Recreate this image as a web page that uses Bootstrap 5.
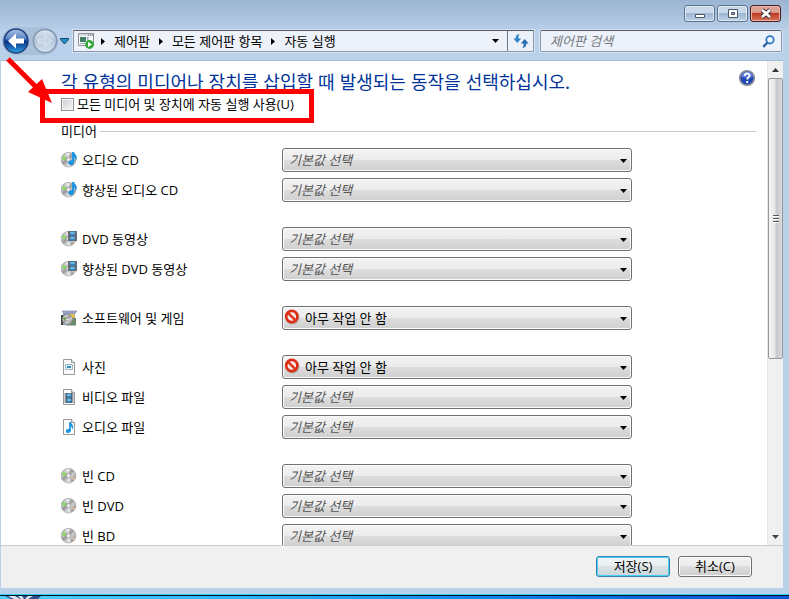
<!DOCTYPE html>
<html lang="ko">
<head>
<meta charset="utf-8">
<meta name="viewport" content="width=device-width, initial-scale=1">
<title>자동 실행</title>
<link href="https://cdn.jsdelivr.net/npm/bootstrap@5.3.0/dist/css/bootstrap.min.css" rel="stylesheet">
<style>
body{font-family:"Open Sans","Noto Sans CJK KR",sans-serif;font-size:13px;line-height:20px;color:#000;background:#b9d1ea}
svg{display:block;flex:none}
.titlebar{height:29px;gap:2px;padding:5px 8px 0;background:linear-gradient(#9bb5d2,#b7cde7)}
.win-btn{width:31px;height:17px;padding:0;border:1px solid #5c738f;border-radius:3px;background:linear-gradient(#c9d9ea 0 45%,#9db6d1 50%,#bcd3ea);box-shadow:inset 0 0 0 1px #dfeaf5}
.win-btn svg{margin:auto}
.win-close{border-color:#4d1a22;background:linear-gradient(#dba193 0 42%,#bc3a24 50%,#d4745a);box-shadow:inset 0 0 0 1px #e7b6a8}
.toolbar{height:31px;gap:4px;padding:1px 7px 8px 2px;background:#b9d1ea}
.back-group{gap:2px}
.orbs{gap:2px;border-radius:14px;background:#a9c0db}
.plain-btn{border:0;padding:0;background:none}
.address,.finder{height:22px;background:#edf2fa;border:1px solid #8a98aa;border-top-color:#555f6c;box-shadow:0 0 0 1px #d4e2f1}
.address a{color:#000;text-decoration:none}
.address .crumb{gap:9px;padding-left:7px}
.refresh{width:26px;height:20px;border-left:1px solid #6d7580}
.finder{width:242px;margin-left:2px;padding:0 6px 0 9px;border-radius:2px}
.finder input{border:0;outline:0;background:none;font-style:italic;padding:0;min-width:0;line-height:18px}
.finder input::placeholder{color:#76797e;opacity:1}
.client{margin:0 6px 0 1px;border-top:1px solid #a9bccf;background:#fff}
.pane{padding:8px 11px 0 60px}
.heading{font-family:"Noto Sans CJK KR",sans-serif;font-size:18px;line-height:24px;color:#039;margin:0;font-weight:400}
.use-all{height:22px;gap:3px}
.use-all input{appearance:none;width:13px;height:13px;border:1px solid #8e8f8f;background:linear-gradient(135deg,#c9cdd3,#f8f8f8);box-shadow:inset 0 0 0 1px #f6f6f6;margin:0}
fieldset{min-width:0}
legend{font-size:13px;line-height:20px;float:none;width:auto;margin:0}
.legend-row{gap:3px;margin:6px 0 7px}
.legend-row span{height:1px;background:#ccc}
.media-groups{gap:25px}
.media-group{gap:6px}
.media-row{height:24px}
.media-row label{width:221px;gap:5px}
.picker{width:350px}
.picker select{appearance:none;width:100%;height:24px;border:1px solid #707070;border-radius:3px;padding:0 24px 0 6px;line-height:22px;color:#555;font-style:italic;background:linear-gradient(#f3f3f3,#ebebeb 50%,#dddddd 51%,#cfcfcf);box-shadow:inset 0 0 0 1px #fbfbfb}
.picker .chosen{font-style:normal;color:#000;padding-left:22px}
.picker .drop{position:absolute;right:5px;top:11px;pointer-events:none}
.picker .ban{position:absolute;left:2px;top:3px;pointer-events:none}
.scroller{width:16px;background:#f0f0f0;border-left:1px solid #e5e5e5}
.scroller button{height:17px}
.thumb{height:281px;border:1px solid #979797;border-radius:2px;background:linear-gradient(90deg,#f5f5f5,#e5e5e7 45%,#c5c7cb 60%,#dcdcde)}
.actions{height:43px;margin:0 6px 0 1px;padding:0 31px 2px 0;gap:8px;background:#f0f0f0;border-top:1px solid #ccc}
.cmd{width:74px;height:21px;padding:0;border:1px solid #707070;border-radius:3px;line-height:19px;background:linear-gradient(#f3f3f3,#ebebeb 49%,#dddddd 50%,#cfcfcf);box-shadow:inset 0 0 0 1px #fbfbfb}
.cmd-main{border-color:#3c7fb1;box-shadow:inset 0 0 0 1px #46d0f2;background:linear-gradient(#f2f5f6,#e8eef0 49%,#dae2e5 50%,#ccd7db)}
.desktop{height:5px;margin-top:6px;padding-top:1px;border-top:1px solid #2fd3ea;background:linear-gradient(#03152e 0 1px,transparent 1px),linear-gradient(90deg,#4fd0f6,#2bb5f7 30%,#0a6fe0 75%,#0654d8)}
.callout{position:absolute;left:0;top:52px;pointer-events:none}
</style>
<script src="https://cdn.jsdelivr.net/npm/bootstrap@5.3.0/dist/js/bootstrap.bundle.min.js"></script>
</head>
<body class="vh-100 d-flex flex-column overflow-hidden position-relative">
<svg width="0" height="0" class="position-absolute" aria-hidden="true">
<defs>
<linearGradient id="silver" x1="0" y1="0" x2="1" y2="1"><stop offset="0" stop-color="#8f8f8f"/><stop offset=".25" stop-color="#d2d2d2"/><stop offset=".45" stop-color="#989898"/><stop offset=".6" stop-color="#cfcfcf"/><stop offset="1" stop-color="#757575"/></linearGradient>
<linearGradient id="orb" x1="0" y1="0" x2="0" y2="1"><stop offset="0" stop-color="#8fb2df"/><stop offset=".45" stop-color="#2b5db0"/><stop offset=".52" stop-color="#0b2f86"/><stop offset="1" stop-color="#2fa5e6"/></linearGradient>
<linearGradient id="orbOff" x1="0" y1="0" x2="0" y2="1"><stop offset="0" stop-color="#dce6f0"/><stop offset=".5" stop-color="#b4c6d9"/><stop offset="1" stop-color="#d5e2ef"/></linearGradient>
<symbol id="disc" viewBox="0 0 16 16"><circle cx="7.500" cy="7.700" r="7.300" fill="url(#silver)" stroke="#8d8d8d" stroke-width=".6"/><path d="M7.500 8 5 1.200 9 .9Z M7.500 8 10 14.600 6 14.800Z" fill="#fff" opacity=".6"/><path d="M.8 6 3 4l2.500 2.500L3 8Z" fill="#7fe04c"/><path d="m10 9 4.200 1.500-1 1.800Z" fill="#e8c3a0"/><circle cx="7.500" cy="7.700" r="2.300" fill="#ddd" stroke="#999" stroke-width=".6"/><circle cx="7.500" cy="7.700" r=".8" fill="#fff"/></symbol>
<symbol id="note" viewBox="0 0 8 12"><path d="M3.600 0h1.900c.2 2 2.600 2.600 2.500 5.300-.1 1.400-.6 2.400-1.500 3.200.5-2 .1-3.300-1-3.900v5C5.500 11 4 12 2.400 12 1 12 0 11.200 0 10c0-1.300 1.300-2.300 2.600-2.300.4 0 .7 0 1 .2Z" fill="#1a94e2"/></symbol>
<symbol id="film" viewBox="0 0 9 10"><path d="M0 0h9v10H0Z" fill="#38424f"/><path d="M2.200.5h4.600v4H2.200Zm0 5h4.600v4H2.200Z" fill="#69b7e4"/><path d="M2.200 3h4.600v1.500H2.200Zm0 5h4.600v1.500H2.200Z" fill="#3a7db5"/><path d="M1 .5v9M8 .5v9" stroke="#e8eef4" stroke-width="1" stroke-dasharray="1 1"/></symbol>
<symbol id="sheet" viewBox="0 0 16 16"><path d="M2.500.5h8l3 3v12h-11Z" fill="#fbfbfb" stroke="#999"/><path d="M10.500.5v3h3" fill="#eee" stroke="#999"/></symbol>
<symbol id="audio-disc" viewBox="0 0 16 16"><use href="#disc" width="16" height="16"/><use href="#note" x="7" y="0" width="9" height="13"/></symbol>
<symbol id="video-disc" viewBox="0 0 16 16"><use href="#disc" width="16" height="16"/><use href="#film" x="7" y="0" width="9" height="10"/></symbol>
<symbol id="software" viewBox="0 0 16 16"><path d="M1 1h15l-1.500 2H2.500Z" fill="#a9afd0" stroke="#7b82a8" stroke-width=".7"/><path d="M2 3h12v12H2Z" fill="#8e9abf"/><path d="M8 4h5.500v8H8Z" fill="#f0c640"/><path d="M0 5h2v10H0Z" fill="#444"/><path d="M7 8h8v7.500H5Z" fill="#6c8b6c"/><circle cx="6.500" cy="9.500" r="5.200" fill="url(#silver)" stroke="#777" stroke-width=".6"/><circle cx="6.500" cy="9.500" r="1.300" fill="#fff" stroke="#888" stroke-width=".5"/><path d="m2 8 2-1 1 2-2 1Z" fill="#62a344"/></symbol>
<symbol id="photo" viewBox="0 0 16 16"><use href="#sheet" width="16" height="16"/><path d="M4.500 5.500h7v5h-7Z" fill="#e9f2f7" stroke="#9ab4c4"/><path d="M6 7h4v2H6Z" fill="#328fbe"/></symbol>
<symbol id="video-file" viewBox="0 0 16 16"><use href="#sheet" width="16" height="16"/><use href="#film" x="3.500" y="4" width="9" height="10"/></symbol>
<symbol id="audio-file" viewBox="0 0 16 16"><use href="#sheet" width="16" height="16"/><use href="#note" x="4.500" y="3" width="8" height="11"/></symbol>
<symbol id="caret" viewBox="0 0 7 4"><path d="M0 0h7L3.500 4Z"/></symbol>
<symbol id="crumb-arrow" viewBox="0 0 4 7"><path d="M0 0v7l4-3.500Z"/></symbol>
<symbol id="no-entry" viewBox="0 0 16 16"><circle cx="8.500" cy="8.600" r="7" fill="#777" opacity=".45"/><circle cx="7.800" cy="7.500" r="5.600" fill="#f1eeee" stroke="#df2c14" stroke-width="2.600"/><path d="m4 3.800 7.600 7.600" stroke="#e3341b" stroke-width="2.600"/></symbol>
</defs>
</svg>

<header>
<div class="titlebar d-flex justify-content-end">
<button class="win-btn" aria-label="최소화"><svg width="12" height="11"><path d="M1.500 6.500h9v3h-9Z" fill="#fff" stroke="#4b5665"/></svg></button>
<button class="win-btn" aria-label="최대화"><svg width="12" height="11"><path d="M1.500 1.500h9v8h-9Z" fill="#fff" stroke="#4b5665"/><path d="M4.500 4.500h3v2h-3Z" fill="#8ba8c6" stroke="#4b5665"/></svg></button>
<button class="win-btn win-close" aria-label="닫기"><svg width="12" height="11"><path d="m2 2 8 7m0-7-8 7" stroke="#40303b" stroke-width="4.400"/><path d="m2 2 8 7m0-7-8 7" stroke="#fff" stroke-width="2.600"/></svg></button>
</div>
<nav class="toolbar d-flex align-items-center" aria-label="탐색">
<div class="back-group d-flex align-items-center">
<div class="orbs d-flex align-items-center">
<button class="plain-btn" aria-label="뒤로"><svg width="28" height="28" viewBox="0 0 28 28"><circle cx="14" cy="14" r="12" fill="url(#orb)" stroke="#22437d" stroke-width="1.500"/><path d="M4 12a10 9 0 0 1 20 0c-6 2-14 2-20 0Z" fill="#fff" opacity=".2"/><path d="m14 6.500-8 7.500 8 7.500v-5.100h8v-4.800h-8Z" fill="#fff"/></svg></button>
<button class="plain-btn" aria-label="앞으로"><svg width="26" height="28" viewBox="1 0 26 28"><circle cx="14" cy="14" r="11.600" fill="url(#orbOff)" stroke="#8296ae" stroke-width="1.500"/><path d="m14 8 7 6-7 6v-4H7v-4h7Z" fill="#c7d5e4" stroke="#dbe6f1"/></svg></button>
</div>
<button class="plain-btn" aria-label="최근 페이지"><svg width="9" height="7"><path d="M.5.500h8v1L4.500 6 .5 1.500Z" fill="#2694c7" stroke="#123f6a"/></svg></button>
</div>
<div class="address d-flex align-items-center flex-grow-1">
<svg class="ms-1" width="16" height="16" viewBox="0 0 16 16"><path d="M.5.500h15v12H.5Z" fill="#f8faf9" stroke="#8b929a"/><path d="M1 1h14v2H1Z" fill="#d9dde2"/><path d="M10 2h1m1 0h1m1 0h1" stroke="#555"/><path d="M2 4h6v5H2Z" fill="#3d8065"/><path d="M9 4h1.500v5H9ZM2 10h5v1H2Z" fill="#91a5bd"/><circle cx="11.500" cy="11.500" r="4.400" fill="#35a83a"/><path d="M10 9v5l4-2.500Z" fill="#fff"/></svg>
<div class="crumb d-flex align-items-center flex-grow-1">
<svg width="4" height="7"><use href="#crumb-arrow"/></svg><a href="#">제어판</a>
<svg width="4" height="7"><use href="#crumb-arrow"/></svg><a href="#">모든 제어판 항목</a>
<svg width="4" height="7"><use href="#crumb-arrow"/></svg><a href="#">자동 실행</a>
</div>
<button class="plain-btn px-2" aria-label="이전 위치"><svg width="7" height="4"><use href="#caret"/></svg></button>
<button class="plain-btn refresh" aria-label="새로 고침"><svg class="mx-auto" width="16" height="14" viewBox="0 0 16 14"><path d="M6.500 0C3 .8 2.600 2.500 2.700 4.500H.3l4 4.500 4-4.500H5.500C5.300 2.800 5.700 1.500 6.500 0Z" fill="#3184c8"/><path d="M9.500 14c3.500-.8 3.900-2.500 3.800-4.500h2.400l-4-4.500-4 4.500h2.800c.2 1.700-.2 3-1 4.500Z" fill="#2a6fb5"/></svg></button>
</div>
<div class="finder d-flex align-items-center">
<input class="flex-grow-1" type="search" placeholder="제어판 검색" aria-label="제어판 검색">
<svg width="13" height="13" viewBox="0 0 13 13"><circle cx="8" cy="4.800" r="3.700" fill="#eef5fc" stroke="#2f79c0" stroke-width="1.800"/><path d="M5.500 7.500 1.200 11.800" stroke="#2a62a8" stroke-width="2.400"/></svg>
</div>
</nav>
</header>

<main class="client d-flex flex-grow-1 overflow-hidden">
<div class="pane flex-grow-1 overflow-hidden">
<div class="d-flex justify-content-between align-items-start">
<h1 class="heading">각 유형의 미디어나 장치를 삽입할 때 발생되는 동작을 선택하십시오.</h1>
<button class="plain-btn" aria-label="도움말"><svg width="18" height="18" viewBox="0 0 18 18"><circle cx="9" cy="9" r="7.300" fill="#2446b4" stroke="#8a8d96" stroke-width="1.600"/><path d="M3 8a6 5.500 0 0 1 12 0c-4 1.500-8 1.500-12 0Z" fill="#6b8ade" opacity=".7"/><path d="M6.600 7c0-3.300 5-3.200 5-.4 0 1.900-2.400 1.900-2.400 4M9.200 12v1.900" fill="none" stroke="#fff" stroke-width="1.900"/></svg></button>
</div>
<div class="use-all d-flex align-items-center"><input type="checkbox" id="useAll"><label for="useAll">모든 미디어 및 장치에 자동 실행 사용(U)</label></div>
<fieldset aria-labelledby="mediaTitle">
<div class="legend-row d-flex align-items-center"><legend id="mediaTitle" class="p-0">미디어</legend><span class="flex-grow-1"></span></div>
<div class="media-groups d-flex flex-column">
<div class="media-group d-flex flex-column">
<div class="media-row d-flex"><label for="m1" class="d-flex align-items-center"><svg width="16" height="16"><use href="#audio-disc"/></svg>오디오 CD</label><div class="picker position-relative"><select id="m1"><option>기본값 선택</option></select><svg class="drop" width="7" height="4"><use href="#caret"/></svg></div></div>
<div class="media-row d-flex"><label for="m2" class="d-flex align-items-center"><svg width="16" height="16"><use href="#audio-disc"/></svg>향상된 오디오 CD</label><div class="picker position-relative"><select id="m2"><option>기본값 선택</option></select><svg class="drop" width="7" height="4"><use href="#caret"/></svg></div></div>
</div>
<div class="media-group d-flex flex-column">
<div class="media-row d-flex"><label for="m3" class="d-flex align-items-center"><svg width="16" height="16"><use href="#video-disc"/></svg>DVD 동영상</label><div class="picker position-relative"><select id="m3"><option>기본값 선택</option></select><svg class="drop" width="7" height="4"><use href="#caret"/></svg></div></div>
<div class="media-row d-flex"><label for="m4" class="d-flex align-items-center"><svg width="16" height="16"><use href="#video-disc"/></svg>향상된 DVD 동영상</label><div class="picker position-relative"><select id="m4"><option>기본값 선택</option></select><svg class="drop" width="7" height="4"><use href="#caret"/></svg></div></div>
</div>
<div class="media-group d-flex flex-column">
<div class="media-row d-flex"><label for="m5" class="d-flex align-items-center"><svg width="16" height="16"><use href="#software"/></svg>소프트웨어 및 게임</label><div class="picker position-relative"><select id="m5" class="chosen"><option>아무 작업 안 함</option></select><svg class="ban" width="16" height="16"><use href="#no-entry"/></svg><svg class="drop" width="7" height="4"><use href="#caret"/></svg></div></div>
</div>
<div class="media-group d-flex flex-column">
<div class="media-row d-flex"><label for="m6" class="d-flex align-items-center"><svg width="16" height="16"><use href="#photo"/></svg>사진</label><div class="picker position-relative"><select id="m6" class="chosen"><option>아무 작업 안 함</option></select><svg class="ban" width="16" height="16"><use href="#no-entry"/></svg><svg class="drop" width="7" height="4"><use href="#caret"/></svg></div></div>
<div class="media-row d-flex"><label for="m7" class="d-flex align-items-center"><svg width="16" height="16"><use href="#video-file"/></svg>비디오 파일</label><div class="picker position-relative"><select id="m7"><option>기본값 선택</option></select><svg class="drop" width="7" height="4"><use href="#caret"/></svg></div></div>
<div class="media-row d-flex"><label for="m8" class="d-flex align-items-center"><svg width="16" height="16"><use href="#audio-file"/></svg>오디오 파일</label><div class="picker position-relative"><select id="m8"><option>기본값 선택</option></select><svg class="drop" width="7" height="4"><use href="#caret"/></svg></div></div>
</div>
<div class="media-group d-flex flex-column">
<div class="media-row d-flex"><label for="m9" class="d-flex align-items-center"><svg width="16" height="16"><use href="#disc"/></svg>빈 CD</label><div class="picker position-relative"><select id="m9"><option>기본값 선택</option></select><svg class="drop" width="7" height="4"><use href="#caret"/></svg></div></div>
<div class="media-row d-flex"><label for="m10" class="d-flex align-items-center"><svg width="16" height="16"><use href="#disc"/></svg>빈 DVD</label><div class="picker position-relative"><select id="m10"><option>기본값 선택</option></select><svg class="drop" width="7" height="4"><use href="#caret"/></svg></div></div>
<div class="media-row d-flex"><label for="m11" class="d-flex align-items-center"><svg width="16" height="16"><use href="#disc"/></svg>빈 BD</label><div class="picker position-relative"><select id="m11"><option>기본값 선택</option></select><svg class="drop" width="7" height="4"><use href="#caret"/></svg></div></div>
</div>
</div>
</fieldset>
</div>
<div class="scroller d-flex flex-column flex-shrink-0">
<button class="plain-btn" aria-label="위로 스크롤"><svg class="mx-auto" width="7" height="4"><path d="M0 4h7L3.500 0Z" fill="#333"/></svg></button>
<div class="thumb d-flex align-items-center justify-content-center"><svg width="8" height="8"><path d="M1 .5h6M1 3.500h6M1 6.500h6" stroke="#555"/><path d="M1 1.500h6M1 4.500h6M1 7.500h6" stroke="#fff"/></svg></div>
<button class="plain-btn mt-auto" aria-label="아래로 스크롤"><svg class="mx-auto" width="7" height="4"><use href="#caret" fill="#444"/></svg></button>
</div>
</main>
<footer>
<div class="actions d-flex align-items-center justify-content-end">
<button class="cmd cmd-main">저장(S)</button>
<button class="cmd">취소(C)</button>
</div>
<div class="desktop"><svg width="44" height="3" aria-hidden="true"><path d="M5 0h36l-3 3H11Z" fill="#2d4f86"/><path d="M8 0h7l5 3h-6Zm10 0h4l2 3h-3Zm10 0h5l-5 3h-3Z" fill="#dce8f2"/></svg></div>
</footer>
<svg class="callout" width="320" height="76" viewBox="0 52 320 76" aria-hidden="true"><path d="M42.500 91.500h269v29h-269Z" fill="none" stroke="#f00" stroke-width="5"/><path d="m8 59 29 29" stroke="#f00" stroke-width="5"/><path d="m28 92 14-13 10 24Z" fill="#f00"/></svg>
</body>
</html>
